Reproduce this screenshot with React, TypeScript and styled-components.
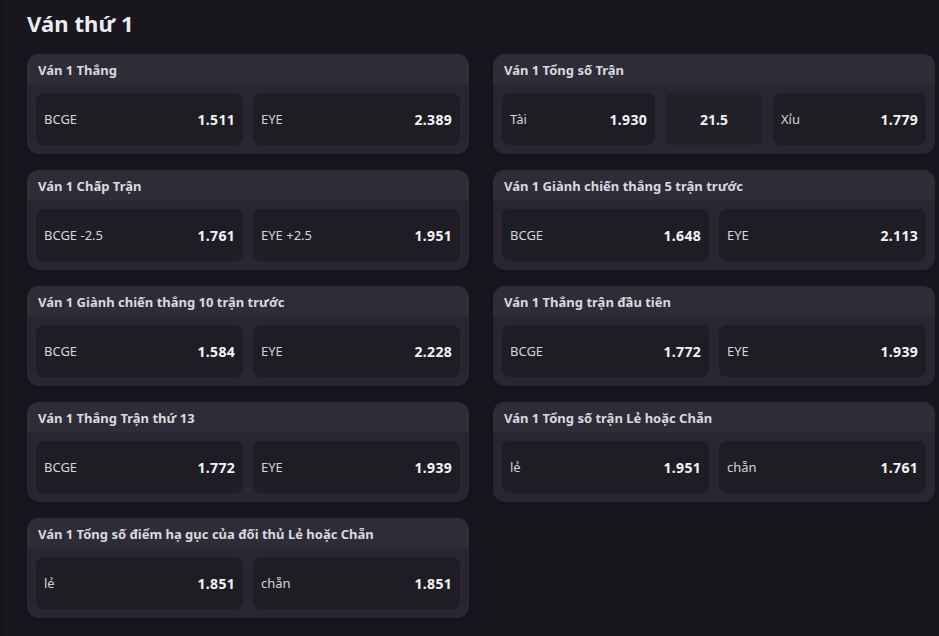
import React from "react";
import styled, { createGlobalStyle } from "styled-components";

const Global = createGlobalStyle`
  html, body { margin: 0; padding: 0; background: #141318; }
  body { font-family: "Noto Sans", "Open Sans", sans-serif; color: #e6e6ea; }
  * { box-sizing: border-box; }
`;

const Page = styled.div`
  margin-left: 4px;
  min-height: 636px;
  background: #18171e;
  padding: 6px 4px 16px 23px;
`;

const Title = styled.h1`
  margin: 0 0 14px;
  font-size: 22px;
  line-height: 34px;
  font-weight: 700;
  color: #ededf0;
  letter-spacing: 0.1px;
`;

const Grid = styled.div`
  display: grid;
  grid-template-columns: 442px 442px;
  column-gap: 24px;
  row-gap: 16px;
  align-items: start;
`;

const Card = styled.section`
  background: #28272f;
  border-radius: 12px;
  overflow: hidden;
  box-shadow: 0 2px 6px rgba(0, 0, 0, 0.25);
`;

const CardHeader = styled.div`
  height: 30px;
  background: #2e2d37;
  padding: 1px 11px 0;
  display: flex;
  align-items: center;
  font-size: 13px;
  font-weight: 700;
  color: #d9d9de;
`;

const Options = styled.div<{ $three?: boolean }>`
  display: grid;
  grid-template-columns: ${(p) => (p.$three ? "1fr 98px 1fr" : "1fr 1fr")};
  gap: 10px;
  padding: 9px;
`;

const Option = styled.div`
  height: 52px;
  border-radius: 8px;
  background: #1e1d24;
  display: flex;
  align-items: center;
  justify-content: space-between;
  padding: 0 8px;
`;

const Line = styled.div`
  height: 52px;
  border-radius: 8px;
  background: #222128;
  display: flex;
  align-items: center;
  justify-content: center;
  font-size: 14px;
  font-weight: 700;
  color: #f1f1f4;
`;

const Label = styled.span`
  font-size: 13px;
  color: #d4d4da;
`;

const Odds = styled.span`
  font-size: 14px;
  font-weight: 700;
  color: #f3f3f6;
  letter-spacing: 0.3px;
`;

type Market = {
  title: string;
  opts: [string, string][];
  line?: string;
};

const markets: Market[] = [
  { title: "Ván 1 Thắng", opts: [["BCGE", "1.511"], ["EYE", "2.389"]] },
  { title: "Ván 1 Tổng số Trận", opts: [["Tài", "1.930"], ["Xỉu", "1.779"]], line: "21.5" },
  { title: "Ván 1 Chấp Trận", opts: [["BCGE -2.5", "1.761"], ["EYE +2.5", "1.951"]] },
  { title: "Ván 1 Giành chiến thắng 5 trận trước", opts: [["BCGE", "1.648"], ["EYE", "2.113"]] },
  { title: "Ván 1 Giành chiến thắng 10 trận trước", opts: [["BCGE", "1.584"], ["EYE", "2.228"]] },
  { title: "Ván 1 Thắng trận đầu tiên", opts: [["BCGE", "1.772"], ["EYE", "1.939"]] },
  { title: "Ván 1 Thắng Trận thứ 13", opts: [["BCGE", "1.772"], ["EYE", "1.939"]] },
  { title: "Ván 1 Tổng số trận Lẻ hoặc Chẵn", opts: [["lẻ", "1.951"], ["chẵn", "1.761"]] },
  { title: "Ván 1 Tổng số điểm hạ gục của đối thủ Lẻ hoặc Chẵn", opts: [["lẻ", "1.851"], ["chẵn", "1.851"]] },
];

export default function App() {
  return (
    <>
      <Global />
      <Page>
        <Title>Ván thứ 1</Title>
        <Grid>
          {markets.map((m) => (
            <Card key={m.title}>
              <CardHeader>{m.title}</CardHeader>
              <Options $three={!!m.line}>
                <Option>
                  <Label>{m.opts[0][0]}</Label>
                  <Odds>{m.opts[0][1]}</Odds>
                </Option>
                {m.line && <Line>{m.line}</Line>}
                <Option>
                  <Label>{m.opts[1][0]}</Label>
                  <Odds>{m.opts[1][1]}</Odds>
                </Option>
              </Options>
            </Card>
          ))}
        </Grid>
      </Page>
    </>
  );
}
